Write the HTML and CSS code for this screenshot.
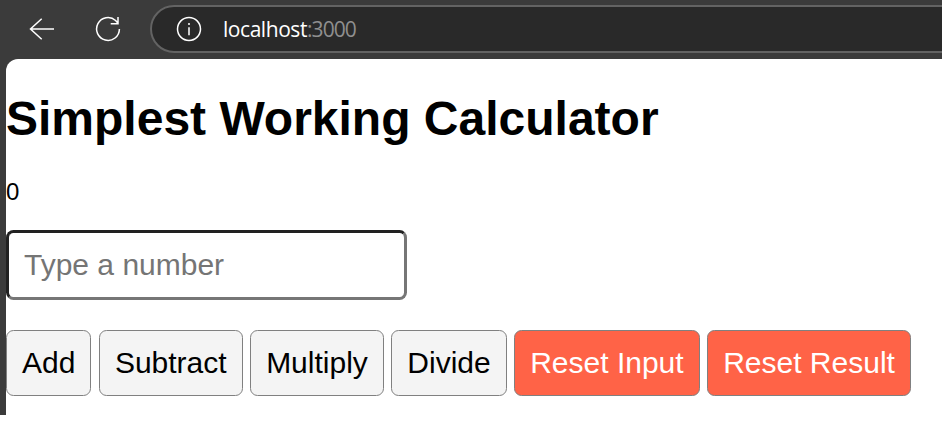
FILE: index.html
```html
<!DOCTYPE html>
<html lang="en">
<head>
<meta charset="utf-8">
<title>Simplest Working Calculator</title>
<link rel="stylesheet" href="styles.css">
</head>
<body>
<div class="browser">
  <header class="toolbar">
    <svg class="back" width="26" height="24" viewBox="0 0 26 24"><path d="M12.7 1.7 1.5 12l11.2 10.3M1.5 12H25"/></svg>
    <svg class="reload" width="26" height="26" viewBox="0 0 26 26"><path d="M24.4 13A11.4 11.4 0 1 1 20.6 4.5L23 7.3M23 1v6.8h-7.3"/></svg>
    <div class="address">
      <svg class="info" width="26" height="26" viewBox="0 0 26 26"><circle cx="13" cy="13" r="11.5"/><path d="M13 11.2v8M13 7v2"/></svg>
      <span class="url">localhost<span class="port">:3000</span></span>
    </div>
  </header>
  <main class="page">
    <h1>Simplest Working Calculator</h1>
    <p class="result">0</p>
    <input class="number" type="text" placeholder="Type a number">
    <div class="actions">
      <button>Add</button>
      <button>Subtract</button>
      <button>Multiply</button>
      <button>Divide</button>
      <button class="reset">Reset Input</button>
      <button class="reset">Reset Result</button>
    </div>
  </main>
</div>
</body>
</html>
```
FILE: styles.css
```css
* {
  box-sizing: border-box;
}

body {
  margin: 0;
  background: #fff;
  font-family: "Liberation Sans", Arial, sans-serif;
  overflow: hidden;
}

.browser {
  height: 415px;
  padding-left: 6px;
  background: #3b3b3b;
}

.toolbar {
  display: flex;
  align-items: center;
  height: 59px;
  padding: 0 0 1px 23px;
}

.toolbar svg {
  flex: none;
  fill: none;
  stroke: #fff;
  stroke-width: 1.5;
}

.back {
  margin-right: 40px;
}

.reload {
  margin-right: 29px;
}

.address {
  display: flex;
  flex: 1;
  align-items: center;
  height: 48px;
  margin-right: -30px;
  padding-left: 24px;
  border: 2px solid #636363;
  border-radius: 24px;
  background: #292929;
}

.url {
  margin-left: 21px;
  color: #fff;
  font-family: "Open Sans", "Noto Sans", sans-serif;
  font-size: 21px;
  letter-spacing: -0.45px;
}

.port {
  color: #8f8f8f;
  letter-spacing: -0.9px;
}

.page {
  height: 356px;
  padding-top: 32px;
  border-top-left-radius: 12px;
  background: #fff;
}

h1 {
  margin: 0;
  font-size: 48px;
  line-height: 55px;
}

.result {
  margin: 32px 0 25px;
  font-size: 24px;
  line-height: 27px;
}

.number {
  display: block;
  width: 401px;
  height: 70px;
  padding: 0 15px;
  border: 3px solid;
  border-color: #212121 #767676 #767676 #212121;
  border-radius: 7.5px;
  background: #fff;
  font: 30px "Liberation Sans", Arial, sans-serif;
}

.number::placeholder {
  color: #757575;
}

.actions {
  display: flex;
  gap: 7.5px;
  margin-top: 30px;
}

button {
  height: 66px;
  padding: 0 15px;
  border: 1px solid #808080;
  border-radius: 7.5px;
  background: #f4f4f4;
  color: #000;
  font: 30px "Liberation Sans", Arial, sans-serif;
  white-space: nowrap;
}

.reset {
  background: #ff6347;
  color: #fff;
}
```
